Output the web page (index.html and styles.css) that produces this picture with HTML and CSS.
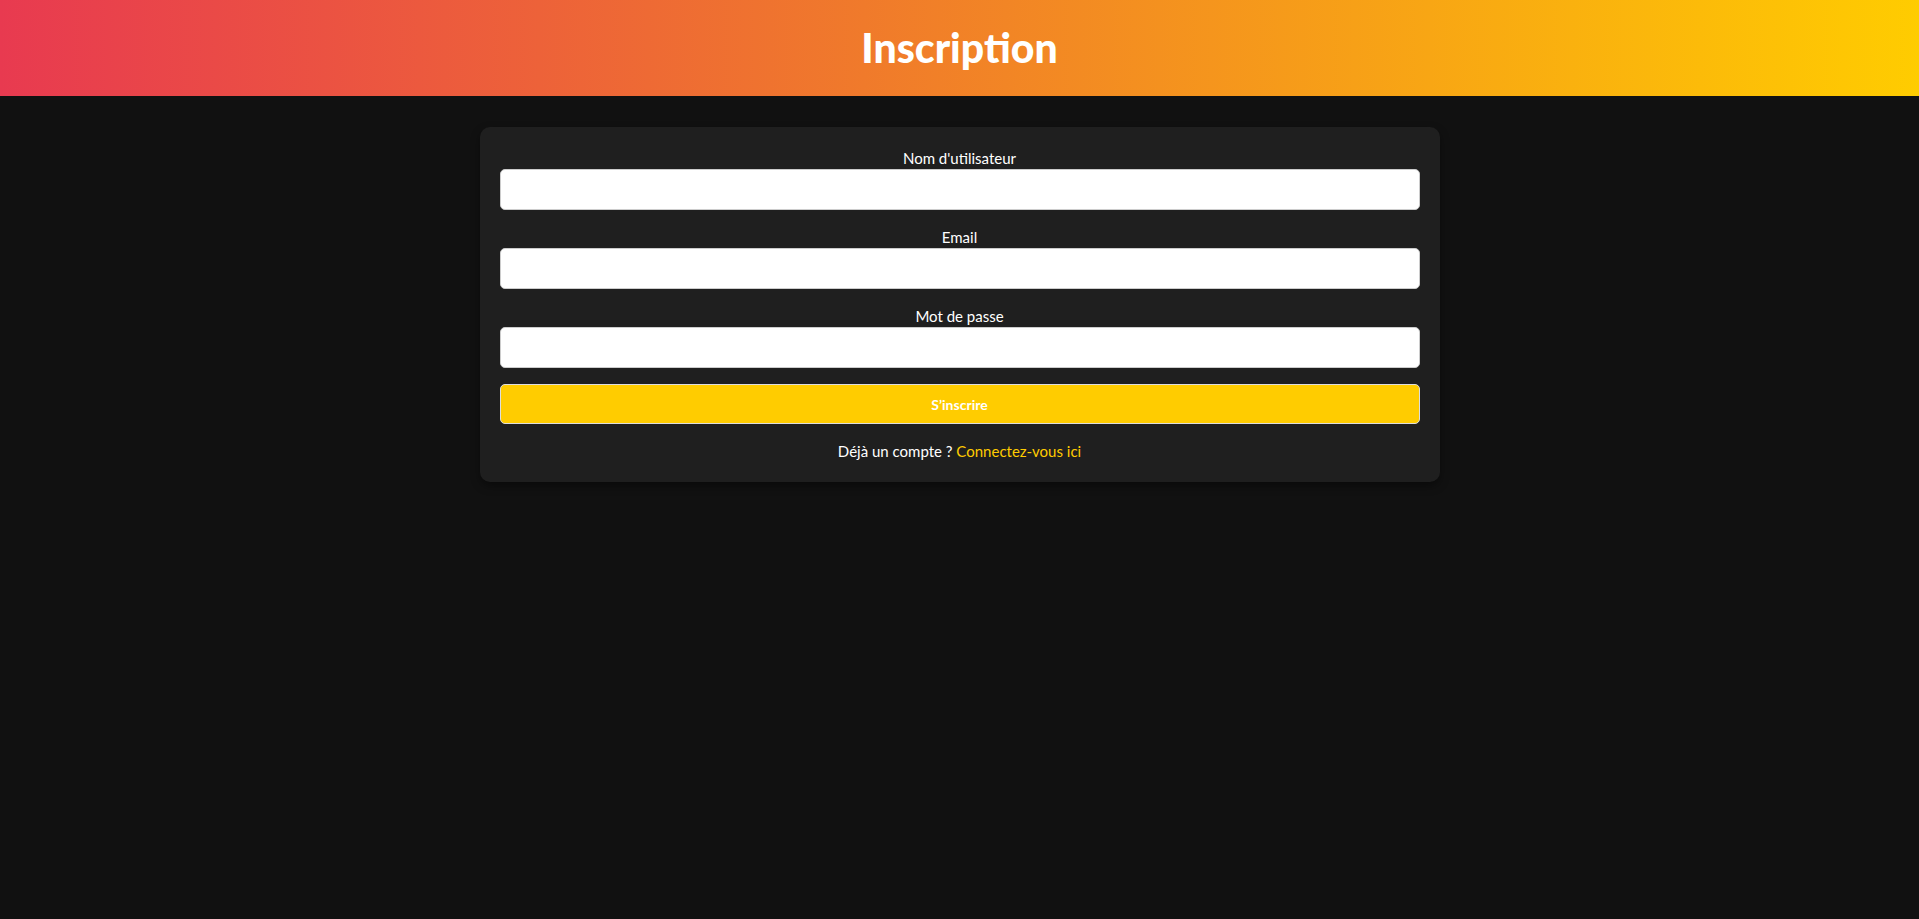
FILE: index.html
```html
<!DOCTYPE html>
<html lang="fr">
<head>
<meta charset="utf-8">
<title>Inscription</title>
<link rel="stylesheet" href="styles.css">
</head>
<body>
<header class="site-header">
  <h1 class="site-title">Inscription</h1>
</header>
<main class="page">
  <form class="card">
    <div class="field">
      <label class="field-label" for="username">Nom d'utilisateur</label>
      <input class="field-input" id="username" type="text">
    </div>
    <div class="field">
      <label class="field-label" for="email">Email</label>
      <input class="field-input" id="email" type="email">
    </div>
    <div class="field">
      <label class="field-label" for="password">Mot de passe</label>
      <input class="field-input" id="password" type="password">
    </div>
    <button class="submit" type="button">S’inscrire</button>
    <p class="switch">Déjà un compte ? <a class="switch-link" href="#">Connectez-vous ici</a></p>
  </form>
</main>
</body>
</html>
```

FILE: styles.css
```css
* { box-sizing: border-box; }
html, body { margin: 0; padding: 0; }
body {
  background: #111111;
  color: #ffffff;
  font-family: "Lato", "Open Sans", sans-serif;
  min-height: 919px;
}
.site-header {
  background: linear-gradient(to right, #e83a50, #f07a2b 45%, #ffcc00);
  height: 96px;
  display: flex;
  align-items: center;
  justify-content: center;
}
.site-title {
  margin: 0;
  font-size: 41px;
  font-weight: 900;
  line-height: 1;
  color: #ffffff;
  padding-bottom: 2px;
}
.page {
  display: flex;
  justify-content: center;
  padding-top: 31px;
}
.card {
  width: 960px;
  background: #1f1f1f;
  border-radius: 10px;
  padding: 20px;
  box-shadow: 0 4px 10px rgba(0, 0, 0, 0.4);
  display: flex;
  flex-direction: column;
}
.field {
  display: flex;
  flex-direction: column;
  margin-bottom: 16px;
}
.field-label {
  text-align: center;
  font-size: 15px;
  line-height: 22px;
  color: #ffffff;
}
.field-input {
  height: 41px;
  border: 1px solid #cccccc;
  border-radius: 5px;
  background: #ffffff;
  padding: 10px;
  font-size: 16px;
  font-family: inherit;
}
.submit {
  height: 40px;
  background: #ffcc00;
  border: 1px solid #dddddd;
  border-radius: 5px;
  color: #ffffff;
  font-family: inherit;
  font-weight: 700;
  font-size: 14px;
  cursor: pointer;
}
.switch {
  margin: 16px 0 0;
  text-align: center;
  font-size: 15px;
  line-height: 22px;
}
.switch-link {
  color: #ffcc00;
  text-decoration: none;
}
```
